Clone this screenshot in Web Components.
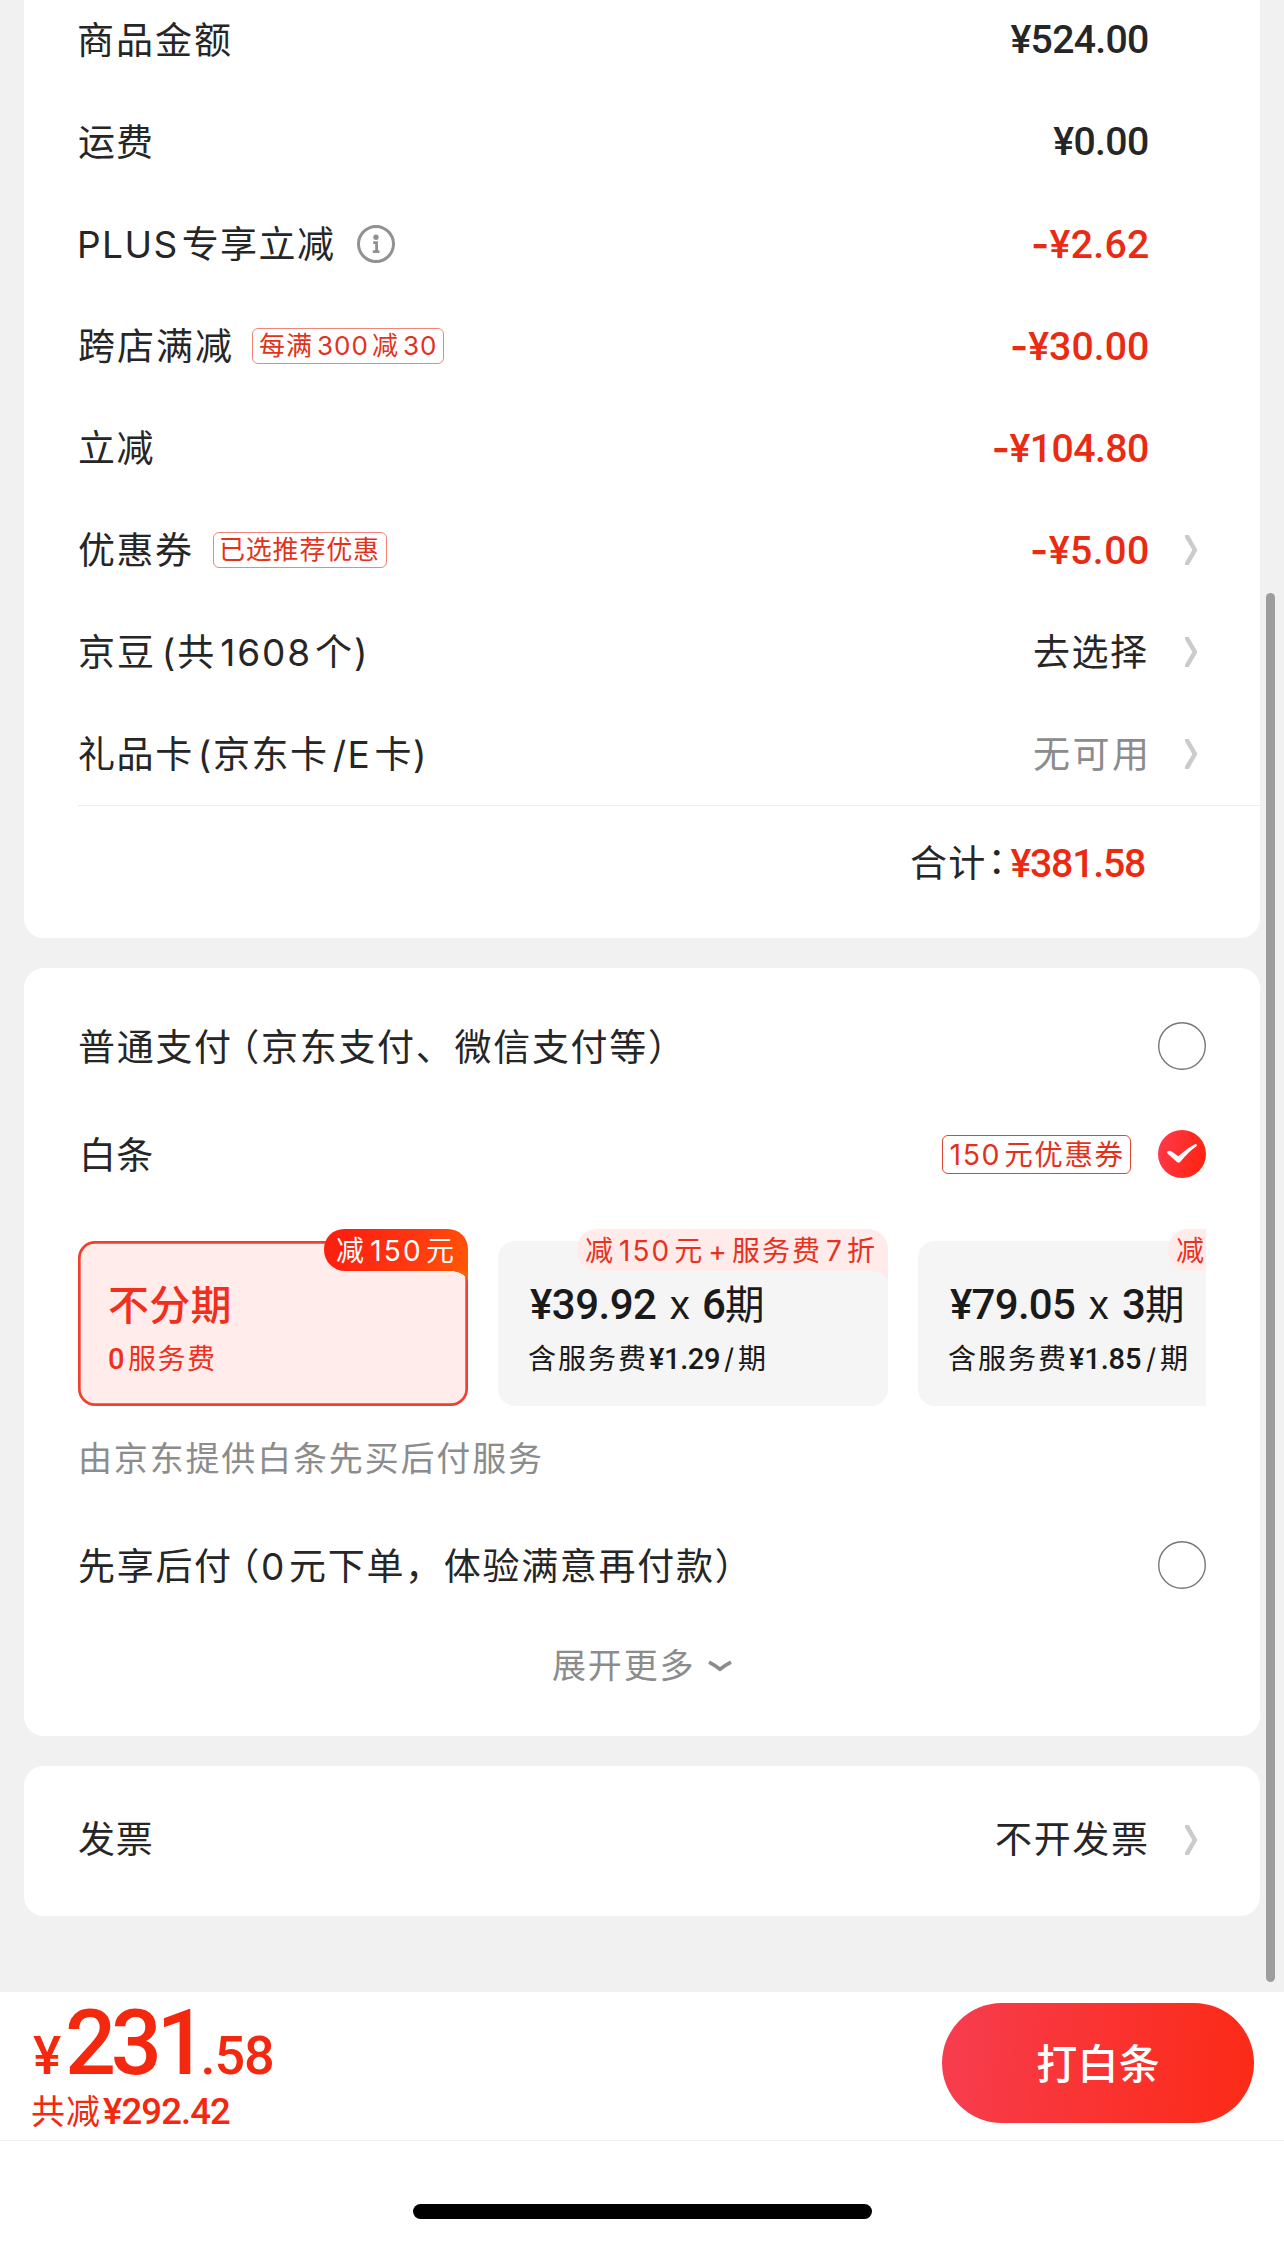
<!DOCTYPE html>
<html lang="zh-CN">
<head>
<meta charset="utf-8">
<title>结算</title>
<style>
  html, body { margin: 0; padding: 0; }
  body {
    width: 1284px; height: 2243px; overflow: hidden; background: #f1f1f1; color: #262626;
    font-family: Inter, "Noto Sans CJK SC", sans-serif; font-size: 37px; line-height: 1;
  }
  .hy { font-family: Inter; font-weight: 600; }
  .po { font-feature-settings: "halt"; margin-left: 8px; }
  .colon { font-feature-settings: "halt"; }
  .gl { margin-left: 4px; }
  .gr { margin-right: 3px; }
</style>
</head>
<body>
<checkout-page>
  <sheet-card class="first" style="height:938px">
    <summary-row><fit-text slot="label" w="151">商品金额</fit-text><fit-text num w="137.5">¥524.00</fit-text></summary-row>
    <summary-row><fit-text slot="label" w="72">运费</fit-text><fit-text num w="94.7">¥0.00</fit-text></summary-row>
    <summary-row red><fit-text slot="label" w="253" style="margin-left:1px"><span class="gr">PLUS</span>专享立减</fit-text><info-icon slot="label"></info-icon><fit-text num w="115"><span class="hy">-</span>¥2.62</fit-text></summary-row>
    <summary-row red><fit-text slot="label" w="152">跨店满减</fit-text><promo-tag slot="label" style="width:192px"><fit-text w="175">每满<span class="gl gr">300</span>减<span class="gl">30</span></fit-text></promo-tag><fit-text num w="136"><span class="hy">-</span>¥30.00</fit-text></summary-row>
    <summary-row red><fit-text slot="label" w="73.5">立减</fit-text><fit-text num w="154.3"><span class="hy">-</span>¥104.80</fit-text></summary-row>
    <summary-row red arrow><fit-text slot="label" w="113">优惠券</fit-text><promo-tag slot="label" style="width:174px"><fit-text w="157">已选推荐优惠</fit-text></promo-tag><fit-text num w="116"><span class="hy">-</span>¥5.00</fit-text></summary-row>
    <summary-row arrow><fit-text slot="label" w="285">京豆<span class="gl" style="margin-left:6px">(</span>共<span class="gl gr">1608</span>个)</fit-text><fit-text w="113" style="margin-right:1px">去选择</fit-text></summary-row>
    <summary-row arrow><fit-text slot="label" w="344">礼品卡<span class="gl">(</span>京东卡<span class="gl gr">/E</span>卡)</fit-text><fit-text w="111" style="color:#8c8c8c;margin-right:3px">无可用</fit-text></summary-row>
    <total-row><fit-text slot="label" w="73.5">合计</fit-text><span slot="label" class="colon">：</span><fit-text num w="134.6">¥381.58</fit-text></total-row>
  </sheet-card>

  <sheet-card style="height:768px">
    <pay-option style="margin-top:24px"><fit-text w="581">普通支付<span class="po">（</span>京东支付、微信支付等）</fit-text></pay-option>
    <pay-option checked><fit-text w="68.3" style="margin-left:5px">白条</fit-text><promo-tag big slot="extra" style="width:189px"><fit-text w="172"><span class="gr">150</span>元优惠券</fit-text></promo-tag></pay-option>
    <plan-list>
      <plan-card selected>
        <plan-badge slot="badge" hot style="width:144px"><fit-text w="116">减<span class="gl gr">150</span>元</fit-text></plan-badge>
        <fit-text slot="title" w="120.5" style="font-weight:500;font-size:41px">不分期</fit-text>
        <fit-text slot="sub" num w="14" style="margin-right:5px">0</fit-text><fit-text slot="sub" w="86">服务费</fit-text>
      </plan-card>
      <plan-card>
        <plan-badge slot="badge" style="width:311px"><fit-text w="288">减<span class="gl gr">150</span>元<span class="gl gr">+</span>服务费<span class="gl gr">7</span>折</fit-text></plan-badge>
        <fit-text slot="title" num w="126">¥39.92</fit-text><fit-text slot="title" w="18" class="times">x</fit-text><fit-text slot="title" num w="19">6</fit-text><fit-text slot="title" w="37" style="margin-left:1px">期</fit-text>
        <fit-text slot="sub" w="116" style="margin-left:-1px">含服务费</fit-text><fit-text slot="sub" num w="70" style="margin-left:4px">¥1.29</fit-text><fit-text slot="sub" w="9" style="margin:0 5px">/</fit-text><fit-text slot="sub" w="26">期</fit-text>
      </plan-card>
      <plan-card>
        <plan-badge slot="badge" style="width:140px"><fit-text w="26">减</fit-text></plan-badge>
        <fit-text slot="title" num w="125">¥79.05</fit-text><fit-text slot="title" w="18" class="times">x</fit-text><fit-text slot="title" num w="20">3</fit-text><fit-text slot="title" w="37" style="margin-left:2px">期</fit-text>
        <fit-text slot="sub" w="116" style="margin-left:-1px">含服务费</fit-text><fit-text slot="sub" num w="72" style="margin-left:4px">¥1.85</fit-text><fit-text slot="sub" w="9" style="margin:0 5px">/</fit-text><fit-text slot="sub" w="26">期</fit-text>
      </plan-card>
    </plan-list>
    <note-line><fit-text w="460">由京东提供白条先买后付服务</fit-text></note-line>
    <pay-option style="margin-top:22px"><fit-text w="647.6">先享后付<span class="po">（</span><span class="gr">0</span>元下单，体验满意再付款）</fit-text></pay-option>
    <expand-more><fit-text w="139.5">展开更多</fit-text></expand-more>
  </sheet-card>

  <sheet-card style="height:150px">
    <summary-row arrow style="height:147px"><fit-text slot="label" w="72.8">发票</fit-text><fit-text w="151" style="margin-right:1px">不开发票</fit-text></summary-row>
  </sheet-card>

  <checkout-bar slot="bar">
    <fit-text slot="price" num w="29" style="font-size:53px">¥</fit-text><fit-text slot="price" num w="122.5" style="font-size:90px;font-weight:500;margin-left:7px">231</fit-text><fit-text slot="price" num w="68.5" style="font-size:54px;margin-left:13px">.58</fit-text>
    <fit-text slot="saved" w="67">共减</fit-text><fit-text slot="saved" num w="127" style="font-size:36.5px;margin-left:4px">¥292.42</fit-text>
    <fit-text slot="action" w="121.5">打白条</fit-text>
  </checkout-bar>
</checkout-page>

<script>
const define = (name, html, base = HTMLElement) => {
  const tpl = document.createElement('template');
  tpl.innerHTML = html;
  customElements.define(name, class extends base {
    constructor() {
      super();
      this.attachShadow({ mode: 'open' }).append(tpl.content.cloneNode(true));
    }
  });
};

define('checkout-page', `
  <style>
    :host { display: flex; flex-direction: column; position: relative; height: 2243px; }
    main { height: 1992px; box-sizing: border-box; padding: 0 24px; display: flex; flex-direction: column; gap: 30px; }
    .thumb { position: absolute; left: 1266px; top: 593px; width: 9px; height: 1389px; border-radius: 5px; background: #9d9d9d; }
  </style>
  <main><slot></slot></main><slot name="bar"></slot><div class="thumb"></div>`);

define('sheet-card', `
  <style>
    :host { display: block; box-sizing: border-box; background: #fff; border-radius: 20px; overflow: hidden; flex: none; }
    :host(.first) { border-radius: 0 0 20px 20px; }
    :host(.first) .body { margin-top: -11px; }
    .body { display: flex; flex-direction: column; }
  </style>
  <div class="body"><slot></slot></div>`);

define('summary-row', `
  <style>
    :host { display: flex; align-items: center; height: 102px; padding: 0 63px 0 55px; }
    .label { display: flex; align-items: center; flex: 1; }
    .value { display: flex; align-items: center; }
    .value ::slotted([num]) { font-size: 39.2px; padding-top: 2px; }
    :host([red]) .value { color: #ea2a12; }
    svg { width: 12px; height: 30px; margin-left: 37px; display: block; visibility: hidden; }
    :host([arrow]) svg { visibility: visible; }
  </style>
  <div class="label"><slot name="label"></slot></div>
  <div class="value"><slot></slot></div>
  <svg viewBox="0 0 12 30"><path d="M0 0H3.8L12.4 15L3.8 30H0V27.4L7.4 15L0 2.6Z" fill="#cbcbcb"/></svg>`);

define('total-row', `
  <style>
    :host { display: flex; align-items: center; justify-content: flex-end; height: 107px; margin-left: 54px; padding: 4px 115px 0 0; border-top: 1px solid #ededed; }
    .sum { display: flex; margin-left: 4.5px; color: #ea2a12; }
    .sum ::slotted([num]) { font-size: 39.2px; padding-top: 2px; }
    ::slotted(.colon) { margin-left: 3px; padding-bottom: 7px; }
  </style>
  <slot name="label"></slot><div class="sum"><slot></slot></div>`);

define('info-icon', `
  <style>:host { display: block; margin-left: 24px; } svg { display: block; }</style>
  <svg width="38" height="38" viewBox="0 0 38 38">
    <circle cx="19" cy="19" r="17.5" fill="none" stroke="#919191" stroke-width="3"/>
    <circle cx="19" cy="12.3" r="2.7" fill="#919191"/>
    <path d="M16.2 17.6H19.6V26.3M15.8 26.6H22.4" fill="none" stroke="#919191" stroke-width="2.8"/>
  </svg>`);

define('promo-tag', `
  <style>
    :host { display: flex; align-items: center; justify-content: center; box-sizing: border-box; height: 36px; margin-left: 20.5px;
      border: 1px solid #f0857a; border-radius: 6px; color: #e3321c; font-size: 26px; }
    :host([big]) { height: 39px; padding-top: 1.5px; border: 1.4px solid #e0452f; font-size: 28.5px; margin: 0 27px 0 0; }
  </style>
  <slot></slot>`);

define('pay-option', `
  <style>
    :host { display: flex; align-items: center; height: 108px; padding: 0 54px 0 55px; }
    .label { flex: 1; display: flex; align-items: center; padding-top: 2px; }
    svg { display: block; width: 48px; height: 48px; }
    .on { display: none; }
    :host([checked]) .on { display: block; }
    :host([checked]) .off { display: none; }
  </style>
  <div class="label"><slot></slot></div><slot name="extra"></slot>
  <svg class="off" viewBox="0 0 48 48"><circle cx="24" cy="24" r="23.3" fill="none" stroke="#777" stroke-width="1.4"/></svg>
  <svg class="on" viewBox="0 0 48 48">
    <defs><linearGradient id="g" x1="0" y1="0" x2="1" y2=".3"><stop offset="0" stop-color="#ff3a50"/><stop offset="1" stop-color="#ff2512"/></linearGradient></defs>
    <circle cx="24" cy="24" r="24" fill="url(#g)"/>
    <path d="M9.3 21.6C10 20.4 11.6 20.4 12.8 21.1L20.4 26.2C26.5 20.6 31.5 16.9 37 14.2C38.4 13.7 39.6 15.2 38.5 16.3C32.5 20.5 27.3 25.6 22.6 31.6C21.6 32.9 20.3 33.1 19 31.9L10 23.9C9.2 23.2 8.9 22.4 9.3 21.6Z" fill="#fff"/>
  </svg>`);

define('plan-list', `
  <style>
    :host { display: flex; gap: 30px; margin: 21px 54px 0; padding-top: 12px; height: 165px; overflow: hidden; }
  </style>
  <slot></slot>`);

define('plan-card', `
  <style>
    :host { display: flex; flex-direction: column; flex: none; position: relative; box-sizing: border-box; width: 390px; height: 165px;
      padding: 44px 0 0 32px; border-radius: 17px; background: #f5f5f5; color: #1a1a1a; }
    :host([selected]) { padding-left: 31px; background: #ffeceb; color: #f0301c; box-shadow: inset 0 0 0 2.7px #f0412f; }
    .title { display: flex; align-items: baseline; height: 40px; font-size: 39.5px; line-height: 40px; }
    .sub { display: flex; align-items: baseline; height: 28px; margin-top: 20px; font-size: 28px; line-height: 28px; }
    .title ::slotted([num]) { font-size: 42px; }
    .sub ::slotted([num]) { font-size: 29px; }
    .title ::slotted(.times) { margin: 0 14px; }
    .badge { position: absolute; right: 0; top: -12px; }
  </style>
  <div class="title"><slot name="title"></slot></div>
  <div class="sub"><slot name="sub"></slot></div>
  <div class="badge"><slot name="badge"></slot></div>`);

define('plan-badge', `
  <style>
    :host { display: flex; flex-direction: column; color: #e8321f; font-size: 28px; --fill: #ffebe9; }
    :host([hot]) { color: #fff; --fill: linear-gradient(115deg, #fb210f 15%, #ff3a10 65%, #ff5a04 100%); }
    .pill { display: flex; align-items: center; box-sizing: border-box; height: 42px; padding: 2px 0 0 9px; border-radius: 20px 20px 0 21px; background: var(--fill); }
    :host([hot]) .pill { padding-left: 13px; }
    .tail { align-self: flex-end; width: 17px; height: 12px; background: radial-gradient(17px 12px at 0 100%, transparent 97%, #ffebe9 100%); }
    :host([hot]) .tail { background: radial-gradient(17px 12px at 0 100%, transparent 97%, #ff6004 100%); }
  </style>
  <div class="pill"><slot></slot></div><div class="tail"></div>`);

define('note-line', `
  <style>:host { display: flex; align-items: center; height: 60px; margin-top: 23px; padding-left: 57px; font-size: 34px; color: #8c8c8c; }</style>
  <slot></slot>`);

define('expand-more', `
  <style>
    :host { display: flex; align-items: center; height: 60px; margin-top: 17px; padding-left: 529px; font-size: 34px; color: #8c8c8c; }
    svg { display: block; margin-left: 15.5px; }
  </style>
  <slot></slot>
  <svg width="24" height="12" viewBox="0 0 24 12"><path d="M1 2.2C5 4.3 8.5 6.6 12 9.2C15.5 6.6 19 4.3 23 2.2" fill="none" stroke="#8c8c8c" stroke-width="3.6"/></svg>`);

define('checkout-bar', `
  <style>
    :host { display: flex; flex-direction: column; height: 251px; background: #fff; }
    .bar { display: flex; justify-content: space-between; box-sizing: border-box; height: 149px; padding: 11px 30px 0 33px; border-bottom: 1px solid #f0f0f0; }
    .amounts { display: flex; flex-direction: column; color: #f3280e; }
    .price { display: flex; align-items: baseline; height: 80px; line-height: 80px; margin-top: 1px; }
    .saved { display: flex; align-items: baseline; height: 40px; line-height: 40px; margin: 8px 0 0 -1px; font-size: 34px; }
    button { all: unset; box-sizing: border-box; padding-top: 2px; display: flex; align-items: center; justify-content: center; width: 312px; height: 120px; border-radius: 60px;
      background: linear-gradient(95deg, #f73d50 0%, #f93434 45%, #fc2a16 100%); color: #fff; font-size: 41px; font-weight: 500; }
    .home { align-self: center; width: 459px; height: 15px; margin-top: 63px; border-radius: 8px; background: #000; }
  </style>
  <div class="bar">
    <div class="amounts"><div class="price"><slot name="price"></slot></div><div class="saved"><slot name="saved"></slot></div></div>
    <button><slot name="action"></slot></button>
  </div>
  <div class="home"></div>`);

/* Text whose inked extent is tracked to exactly w pixels; side bearings are trimmed off its box. */
const ctx = document.createElement('canvas').getContext('2d');
customElements.define('fit-text', class extends HTMLElement {
  constructor() {
    super();
    this.attachShadow({ mode: 'open' }).innerHTML = `
      <style>
        :host { display: inline-flex; flex: none; white-space: pre; }
        :host([num]) { font-family: Roboto, "Noto Sans CJK SC", sans-serif; font-weight: 500; }
        span { display: inline-block; }
      </style><span><slot></slot></span>`;
  }
  connectedCallback() {
    const w = parseFloat(this.getAttribute('w'));
    const span = this.shadowRoot.querySelector('span');
    const text = this.textContent;
    const walker = document.createTreeWalker(this, NodeFilter.SHOW_TEXT);
    const nodes = [];
    while (walker.nextNode()) nodes.push(walker.currentNode);
    const measure = (ch, node) => {
      const cs = getComputedStyle(node.parentElement);
      ctx.font = `${cs.fontWeight} ${cs.fontSize} ${cs.fontFamily}`;
      return ctx.measureText(ch);
    };
    const a = measure(text[0], nodes[0]);
    const b = measure(text[text.length - 1], nodes[nodes.length - 1]);
    const left = -a.actualBoundingBoxLeft;
    const right = b.width - b.actualBoundingBoxRight;
    const natural = span.getBoundingClientRect().width;
    const ls = text.length > 1 ? (w - (natural - left - right)) / (text.length - 1) : 0;
    this.style.letterSpacing = ls + 'px';
    span.style.marginLeft = -left + 'px';
    span.style.marginRight = -(right + ls) + 'px';
  }
});
</script>
</body>
</html>
